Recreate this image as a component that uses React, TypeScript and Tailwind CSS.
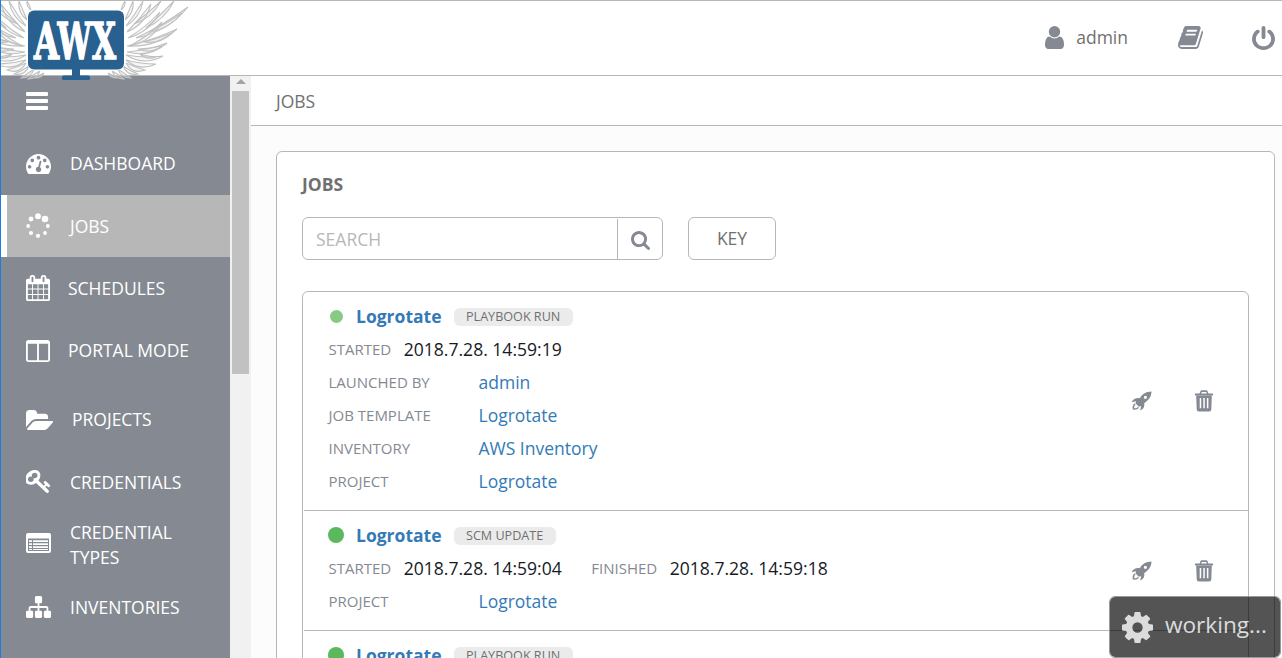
import React from 'react';

type IconProps = { box: string; className: string; children: React.ReactNode };

function Icon({ box, className, children }: IconProps) {
  return (
    <svg viewBox={box} className={className} fill="currentColor" fillRule="evenodd" preserveAspectRatio="none">
      {children}
    </svg>
  );
}

const paths = {
  gauge:
    'M384 1152q0-53-37.5-90.5t-90.5-37.5-90.5 37.5-37.5 90.5 37.5 90.5 90.5 37.5 90.5-37.5 37.5-90.5zm192-448q0-53-37.5-90.5t-90.5-37.5-90.5 37.5-37.5 90.5 37.5 90.5 90.5 37.5 90.5-37.5 37.5-90.5zm428 481l101-382q6-26-7.5-48.5t-38.5-29.5-48 6.5-30 39.5l-101 382q-60 5-107 43.5t-63 98.5q-20 77 20 146t117 89 146-20 89-117q16-60-6-117t-72-91zm660-33q0-53-37.5-90.5t-90.5-37.5-90.5 37.5-37.5 90.5 37.5 90.5 90.5 37.5 90.5-37.5 37.5-90.5zm-640-640q0-53-37.5-90.5t-90.5-37.5-90.5 37.5-37.5 90.5 37.5 90.5 90.5 37.5 90.5-37.5 37.5-90.5zm448 192q0-53-37.5-90.5t-90.5-37.5-90.5 37.5-37.5 90.5 37.5 90.5 90.5 37.5 90.5-37.5 37.5-90.5zm320 448q0 261-141 483-19 29-54 29h-1402q-35 0-54-29-141-221-141-483 0-182 71-348t191-286 286-191 348-71 348 71 286 191 191 286 71 348z',
  calendar:
    'M192 1664h288v-288h-288v288zm352 0h320v-288h-320v288zm-352-352h288v-320h-288v320zm352 0h320v-320h-320v320zm-352-384h288v-288h-288v288zm736 736h320v-288h-320v288zm-384-736h320v-288h-320v288zm768 736h288v-288h-288v288zm-384-352h320v-320h-320v320zm-352-864v-288q0-13-9.5-22.5t-22.5-9.5h-64q-13 0-22.5 9.5t-9.5 22.5v288q0 13 9.5 22.5t22.5 9.5h64q13 0 22.5-9.5t9.5-22.5zm736 864h288v-320h-288v320zm-384-384h320v-288h-320v288zm384 0h288v-288h-288v288zm32-480v-288q0-13-9.5-22.5t-22.5-9.5h-64q-13 0-22.5 9.5t-9.5 22.5v288q0 13 9.5 22.5t22.5 9.5h64q13 0 22.5-9.5t9.5-22.5zm384-64v1280q0 52-38 90t-90 38h-1408q-52 0-90-38t-38-90v-1280q0-52 38-90t90-38h128v-96q0-66 47-113t113-47h64q66 0 113 47t47 113v96h384v-96q0-66 47-113t113-47h64q66 0 113 47t47 113v96h128q52 0 90 38t38 90z',
  columns:
    'M224 1536h608v-1152h-640v1120q0 13 9.5 22.5t22.5 9.5zm1376-32v-1120h-640v1152h608q13 0 22.5-9.5t9.5-22.5zm128-1216v1216q0 66-47 113t-113 47h-1344q-66 0-113-47t-47-113v-1216q0-66 47-113t113-47h1344q66 0 113 47t47 113z',
  folder:
    'M1815 952q0 31-31 66l-336 396q-43 51-120.5 86.5t-143.5 35.5h-1088q-34 0-60.5-13t-26.5-43q0-31 31-66l336-396q43-51 120.5-86.5t143.5-35.5h1088q34 0 60.5 13t26.5 43zm-343-344v160h-832q-94 0-197 47.5t-164 119.5l-337 396-5 6q0-4-.5-12.5t-.5-12.5v-960q0-92 66-158t158-66h320q92 0 158 66t66 158v32h544q92 0 158 66t66 158z',
  key:
    'M832 512q0-80-56-136t-136-56-136 56-56 136q0 42 19 83-41-19-83-19-80 0-136 56t-56 136 56 136 136 56 136-56 56-136q0-42-19-83 41 19 83 19 80 0 136-56t56-136zm851 704q0 17-49 66t-66 49q-9 0-28.5-16t-36.5-33-38.5-40-24.5-26l-96 96 220 220q28 28 28 68 0 42-39 81t-81 39q-40 0-68-28l-671-671q-176 131-365 131-163 0-265.5-102.5t-102.5-265.5q0-160 95-313t248-248 313-95q163 0 265.5 102.5t102.5 265.5q0 189-131 365l355 355 96-96q-3-3-26-24.5t-40-38.5-33-36.5-16-28.5q0-17 49-66t66-49q13 0 23 10 6 6 46 44.5t82 79.5 86.5 86 73 78 28.5 41z',
  sitemap:
    'M1792 1248v320q0 40-28 68t-68 28h-320q-40 0-68-28t-28-68v-320q0-40 28-68t68-28h96v-192h-512v192h96q40 0 68 28t28 68v320q0 40-28 68t-68 28h-320q-40 0-68-28t-28-68v-320q0-40 28-68t68-28h96v-192h-512v192h96q40 0 68 28t28 68v320q0 40-28 68t-68 28h-320q-40 0-68-28t-28-68v-320q0-40 28-68t68-28h96v-192q0-52 38-90t90-38h512v-192h-96q-40 0-68-28t-28-68v-320q0-40 28-68t68-28h320q40 0 68 28t28 68v320q0 40-28 68t-68 28h-96v192h512q52 0 90 38t38 90v192h96q40 0 68 28t28 68z',
  user:
    'M1536 1399q0 109-62.5 187t-150.5 78h-854q-88 0-150.5-78t-62.5-187q0-85 8.5-160.5t31.5-152 58.5-131 94-89 134.5-34.5q131 128 313 128t313-128q76 0 134.5 34.5t94 89 58.5 131 31.5 152 8.5 160.5zm-256-887q0 159-112.5 271.5t-271.5 112.5-271.5-112.5-112.5-271.5 112.5-271.5 271.5-112.5 271.5 112.5 112.5 271.5z',
  book:
    'M1703 478q40 57 18 129l-275 906q-19 64-76.5 107.5t-122.5 43.5h-923q-77 0-148.5-53.5t-99.5-131.5q-24-67-2-127 0-4 3-27t4-37q1-8-3-21.5t-3-19.5q2-11 8-21t16.5-23.5 16.5-23.5q23-38 45-91.5t30-91.5q3-10 .5-30t-.5-28q3-11 17-28t17-23q21-36 42-92t25-90q1-9-2.5-32t.5-28q4-13 22-30.5t22-22.5q19-26 42.5-84.5t27.5-96.5q1-8-3-25.5t-2-26.5q2-8 9-18t18-23 17-21q8-12 16.5-30.5t15-35 16-36 19.5-32 26.5-23.5 36-11.5 47.5 5.5l-1 3q38-9 51-9h761q74 0 114 56t18 130l-274 906q-36 119-71.5 153.5t-128.5 34.5h-869q-27 0-38 15-11 16-1 43 24 70 144 70h923q29 0 56-15.5t35-41.5l300-987q7-22 5-57 38 15 59 43zm-1064 2q-4 13 2 22.5t20 9.5h608q13 0 25.5-9.5t16.5-22.5l21-64q4-13-2-22.5t-20-9.5h-608q-13 0-25.5 9.5t-16.5 22.5zm-83 256q-4 13 2 22.5t20 9.5h608q13 0 25.5-9.5t16.5-22.5l21-64q4-13-2-22.5t-20-9.5h-608q-13 0-25.5 9.5t-16.5 22.5z',
  power:
    'M1664 896q0 156-61 298t-164 245-245 164-298 61-298-61-245-164-164-245-61-298q0-182 80.5-343t226.5-270q43-32 95.5-25t83.5 50q32 42 24.5 94.5t-49.5 84.5q-98 74-151.5 181t-53.5 228q0 104 40.5 198.5t109.5 163.5 163.5 109.5 198.5 40.5 198.5-40.5 163.5-109.5 109.5-163.5 40.5-198.5q0-121-53.5-228t-151.5-181q-42-32-49.5-84.5t24.5-94.5q31-43 84-50t95 25q146 109 226.5 270t80.5 343zm-640-768v640q0 52-38 90t-90 38-90-38-38-90v-640q0-52 38-90t90-38 90 38 38 90z',
  search:
    'M1216 832q0-185-131.5-316.5t-316.5-131.5-316.5 131.5-131.5 316.5 131.5 316.5 316.5 131.5 316.5-131.5 131.5-316.5zm512 832q0 52-38 90t-90 38q-54 0-90-38l-343-342q-179 124-399 124-143 0-273.5-55.5t-225-150-150-225-55.5-273.5 55.5-273.5 150-225 225-150 273.5-55.5 273.5 55.5 225 150 150 225 55.5 273.5q0 220-124 399l343 343q37 37 37 90z',
  cog:
    'M1152 896q0-106-75-181t-181-75-181 75-75 181 75 181 181 75 181-75 75-181zm512-109v222q0 12-8 23t-20 13l-185 28q-19 54-39 91 35 50 107 138 10 12 10 25t-9 23q-27 37-99 108t-94 71q-12 0-26-9l-138-108q-44 23-91 38-16 136-29 186-7 28-36 28h-222q-14 0-24.5-8.5t-11.5-21.5l-28-184q-49-16-90-37l-141 107q-10 9-25 9-14 0-25-11-126-114-165-168-7-10-7-23 0-12 8-23 15-21 51-66.5t54-70.5q-27-50-41-99l-183-27q-13-2-21-12.5t-8-23.5v-222q0-12 8-23t19-13l186-28q14-46 39-92-40-57-107-138-10-12-10-24 0-10 9-23 26-36 98.5-107.5t94.5-71.5q13 0 26 10l138 107q44-23 91-38 16-136 29-186 7-28 36-28h222q14 0 24.5 8.5t11.5 21.5l28 184q49 16 90 37l142-107q9-9 24-9 13 0 25 10 129 119 165 170 7 8 7 22 0 12-8 23-15 21-51 66.5t-54 70.5q26 50 41 98l183 28q13 2 21 12.5t8 23.5z',
};

type Feather = [number, number, number, number, number, number];

// base x, base y, tip x, tip y, bend, width
const feathers: Feather[] = [
  [136, 38, 188, 7, 7, 4],
  [150, 32, 182, 13, 4, 3],
  [127, 46, 177, 29, 7, 4],
  [144, 42, 172, 33, 4, 3],
  [127, 52, 167, 43, 7, 4],
  [138, 49, 162, 46, 4, 3],
  [126, 55, 163, 56, 7, 4],
  [140, 54, 156, 57, 3, 2],
  [126, 60, 156, 64, 6, 4],
  [126, 63, 145, 70, 5, 4],
  [123, 66, 138, 74, 4, 3],
  [118, 69, 131, 78, 3, 3],
  [112, 71, 124, 79, 2, 3],
  [108, 73, 116, 78, 1, 2],
  [128, 38, 160, 12, 6, 3],
  [127, 32, 151, 4, 5, 4],
  [126, 26, 143, 1, 4, 3],
  [125, 20, 133, 1, 3, 3],
  [121, 10, 125, 1, 1, 2],
  [130, 46, 162, 22, 6, 3],
  [146, 28, 174, 1, 4, 3],
  [134, 24, 161, 1, 4, 3],
];

function featherPath([bx, by, tx, ty, bend, w]: Feather) {
  const mx = (bx + tx) / 2;
  const my = (by + ty) / 2;
  const len = Math.hypot(tx - bx, ty - by);
  const nx = -(ty - by) / len;
  const ny = (tx - bx) / len;
  const q = (d: number) => `${(mx + nx * d).toFixed(1)} ${(my + ny * d).toFixed(1)}`;
  return `M${bx} ${by}Q${q(bend + w)} ${tx} ${ty}Q${q(bend - w)} ${bx} ${by}`;
}

function Logo() {
  return (
    <svg viewBox="0 0 200 84" className="block h-[84px] w-[200px]">
      {['', 'translate(152 0) scale(-1 1)'].map((t) => (
        <g key={t} transform={t} fill="#e4e4e4" fillOpacity="0.35" stroke="#c0c0c0" strokeWidth="1.100">
          {feathers.map((f, i) => (
            <path key={i} d={featherPath(f)} />
          ))}
        </g>
      ))}
      <rect x="27" y="9.500" width="98" height="61" rx="8" fill="#fff" />
      <rect x="28" y="10.500" width="96" height="59" rx="6" fill="#286090" />
      <path d="M72 69h8v6.500h8.500a1.500 1.500 0 0 1 1.500 1.500v1.500a1.500 1.500 0 0 1-1.500 1.500h-25a1.500 1.500 0 0 1-1.500-1.500v-1.500a1.500 1.500 0 0 1 1.500-1.500h8.500z" fill="#286090" />
      <g fill="#fff" stroke="#fff" strokeWidth="1.600" fontSize="50" fontWeight="700" fontFamily="'DejaVu Serif', serif">
        <text x="34" y="58.500" textLength="25" lengthAdjust="spacingAndGlyphs">A</text>
        <text x="57.500" y="58.500" textLength="34" lengthAdjust="spacingAndGlyphs">W</text>
        <text x="92" y="58.500" textLength="24" lengthAdjust="spacingAndGlyphs">X</text>
      </g>
    </svg>
  );
}

function Spinner() {
  const dots = [
    [13, 3.2, 2.9], [20, 6, 3.3], [22.8, 13, 1.9], [20, 20, 1.9],
    [13, 22.8, 2.1], [6, 20, 2.1], [3.2, 13, 1.9], [6, 6, 2.4],
  ];
  return (
    <Icon box="0 0 26 26" className="-ml-px mr-px h-[26px] w-[26px]">
      {dots.map(([x, y, r]) => (
        <circle key={`${x}-${y}`} cx={x} cy={y} r={r} />
      ))}
    </Icon>
  );
}

function Rocket() {
  return (
    <Icon box="0 0 21 20" className="h-5 w-[21px]">
      <path d="M20.500 0.500C15 0.600 11.500 2.800 8.700 7.200C5 6.700 2.500 8 0.500 11.200L5 10.300L4.500 12.300L7.800 15.700L9.900 15C9.900 17 9.900 18 8.700 19.500C12.200 18.500 13.800 16 13.200 12.200C17.600 9 20.400 6 20.500 0.500zM14.400 4.700a1.600 1.600 0 1 1 0 3.200a1.600 1.600 0 0 1 0-3.200z" />
      <path d="M3.600 12.200C1.500 14 1.300 16 1.800 18.500C4.500 18.900 6.800 18.400 8 16.700L6.800 16C6 17 4.700 17.400 3.300 17.200C3 15.800 3.300 14.500 4.600 13.500z" />
    </Icon>
  );
}

function Trash() {
  return (
    <Icon box="0 0 20 22" className="h-[22px] w-5">
      <path d="M1 3.400h4.600l.8-2.100Q6.800.3 7.800.3h4.400q1 0 1.400 1l.8 2.100H19v2.200H1zM7.200 3.400h5.600l-.5-1.300H7.700z" />
      <path d="M2.200 5.400h15.600l-.5 14.100q-.2 1.900-2.100 1.900H4.800q-1.900 0-2.100-1.900zM5.700 8v10.300h1.500V8zm3.600 0v10.300h1.500V8zm3.600 0v10.300h1.500V8z" />
    </Icon>
  );
}

function NavItem({ icon, gap, label, active }: { icon: React.ReactNode; gap: string; label: React.ReactNode; active?: boolean }) {
  return (
    <div
      className={
        active
          ? 'flex h-[62px] items-center border-l-[6px] border-white bg-[#b7b7b7] pl-[19px]'
          : 'flex h-[62.600px] shrink-0 items-center pl-[25px]'
      }
    >
      {icon}
      <span className={`${gap} whitespace-nowrap leading-[25px]`}>{label}</span>
    </div>
  );
}

function Sidebar() {
  return (
    <nav className="w-[229px] shrink-0 overflow-hidden bg-[#848992] text-[17.500px] text-white">
      <div className="flex h-[56.500px] flex-col gap-[3px] pt-4 pl-[25px]">
        <span className="h-1 w-[22px] rounded-[1px] bg-white" />
        <span className="h-1 w-[22px] rounded-[1px] bg-white" />
        <span className="h-1 w-[22px] rounded-[1px] bg-white" />
      </div>
      <NavItem label="DASHBOARD" gap="ml-[19px]" icon={<Icon box="0 256 1792 1408" className="h-5 w-[25px]"><path d={paths.gauge} /></Icon>} />
      <NavItem label="JOBS" gap="ml-[18px]" active icon={<Spinner />} />
      <NavItem label="SCHEDULES" gap="ml-[18px]" icon={<Icon box="64 0 1664 1792" className="h-[26px] w-6"><path d={paths.calendar} /></Icon>} />
      <NavItem label="PORTAL MODE" gap="ml-[18px]" icon={<Icon box="64 128 1664 1536" className="h-[22px] w-6"><path d={paths.columns} /></Icon>} />
      <div className="h-[6px]" />
      <NavItem label="PROJECTS" gap="ml-[19px]" icon={<Icon box="-64 128 1879 1408" className="h-5 w-[27px]"><path d={paths.folder} /></Icon>} />
      <NavItem label="CREDENTIALS" gap="ml-[19px]" icon={<Icon box="64 128 1664 1664" className="h-6 w-[25px]"><path d={paths.key} /></Icon>} />
      <NavItem
        label={<>CREDENTIAL<br />TYPES</>}
        gap="ml-[19px]"
        icon={
          <Icon box="0 0 25 20" className="mt-[-3px] h-5 w-[25px]">
            <path d="M2 0h21a2 2 0 0 1 2 2v16a2 2 0 0 1-2 2H2a2 2 0 0 1-2-2V2a2 2 0 0 1 2-2zM2 5.500V18h21V5.500z" />
            <path d="M3 7.200h3v1.900H3zM3 10.200h3v1.900H3zM3 13.200h3v1.900H3zM3 16h3v1H3zM7 7.200h15v1.900H7zM7 10.200h15v1.900H7zM7 13.200h15v1.900H7zM7 16h15v1H7z" />
          </Icon>
        }
      />
      <NavItem label="INVENTORIES" gap="ml-[19px]" icon={<Icon box="0 128 1792 1536" className="h-[22px] w-[25px]"><path d={paths.sitemap} /></Icon>} />
    </nav>
  );
}

type Job = {
  type: string;
  running?: boolean;
  started: string;
  finished?: string;
  details: [string, string][];
};

const jobs: Job[] = [
  {
    type: 'PLAYBOOK RUN',
    running: true,
    started: '2018.7.28. 14:59:19',
    details: [['LAUNCHED BY', 'admin'], ['JOB TEMPLATE', 'Logrotate'], ['INVENTORY', 'AWS Inventory'], ['PROJECT', 'Logrotate']],
  },
  { type: 'SCM UPDATE', started: '2018.7.28. 14:59:04', finished: '2018.7.28. 14:59:18', details: [['PROJECT', 'Logrotate']] },
  { type: 'PLAYBOOK RUN', started: '2018.7.28. 14:58:40', details: [] },
];

function JobRow({ job, first }: { job: Job; first: boolean }) {
  return (
    <div className={first ? 'flex items-center pb-[12px] pt-[8px]' : 'ml-px flex items-center border-t border-[#b7b7b7] pb-[12px] pt-[8px]'}>
      <div className={first ? 'flex-1 pl-[25.500px] text-[17.500px] leading-[33px]' : 'flex-1 pl-[24.500px] text-[17.500px] leading-[33px]'}>
        <div className="flex h-[33px] items-center">
          <span className="flex w-[27.500px] shrink-0 items-center">
            {job.running ? (
              <span className="mb-px ml-[1.500px] h-[13px] w-[13px] rounded-full bg-[#86cb84]" />
            ) : (
              <span className="mb-[2px] ml-[-0.500px] h-4 w-4 rounded-full bg-[#5cb85c]" />
            )}
          </span>
          <span className="font-bold text-[#337ab7]">Logrotate</span>
          <span className="ml-3 mt-px h-[18px] rounded-[6px] bg-[#ebebeb] px-[12.500px] text-[12.600px] leading-[17px] text-[#707070]">{job.type}</span>
        </div>
        <div className="flex h-[33px]">
          <span className="text-[15px] text-[#848992]">STARTED</span>
          <span className="ml-[12.500px] text-[17.560px] text-[#161b1f]">{job.started}</span>
          {job.finished && (
            <>
              <span className="ml-[29.500px] text-[15px] text-[#848992]">FINISHED</span>
              <span className="ml-[12.500px] text-[17.560px] text-[#161b1f]">{job.finished}</span>
            </>
          )}
        </div>
        {job.details.map(([label, value]) => (
          <div key={label} className="flex h-[33px]">
            <span className="w-[150px] text-[15px] text-[#848992]">{label}</span>
            <span className="text-[#337ab7]">{value}</span>
          </div>
        ))}
      </div>
      <div className="flex items-center gap-[42px] pt-[4px] pr-[34px] text-[#848992]">
        <Rocket />
        <Trash />
      </div>
    </div>
  );
}

function Content() {
  return (
    <main className="flex flex-1 flex-col overflow-hidden bg-[#fcfcfc]">
      <div className="flex h-[50px] shrink-0 items-center border-b border-[#b7b7b7] bg-white pl-[25px] pt-[2px] text-[17.500px] text-[#707070]">JOBS</div>
      <section className="mr-[7px] ml-[25px] mt-[25px] h-[600px] shrink-0 rounded-[6px] border border-[#b7b7b7] bg-white px-[25px] pt-5">
        <h1 className="text-[17.500px] leading-[25px] font-bold text-[#707070]">JOBS</h1>
        <div className="mt-5 flex gap-[25px]">
          <div className="flex h-[43px] w-[361px] rounded-[6px] border border-[#b7b7b7]">
            <span className="flex-1 pl-[13px] text-[17.500px] leading-[43px] text-[#b7b7b7]">SEARCH</span>
            <span className="mt-px flex w-[45px] items-center justify-center border-l border-[#b7b7b7] pt-[3px] text-[#848992]">
              <Icon box="64 128 1664 1664" className="h-[19px] w-[19px]"><path d={paths.search} /></Icon>
            </span>
          </div>
          <button className="h-[43px] w-[88px] rounded-[6px] border border-[#b7b7b7] text-[17.500px] text-[#707070]">KEY</button>
        </div>
        <div className="mt-[31px] w-[947px] rounded-[6px] border border-[#b7b7b7]">
          {jobs.map((job, i) => (
            <JobRow key={i} job={job} first={i === 0} />
          ))}
        </div>
      </section>
    </main>
  );
}

export default function App() {
  return (
    <div className="relative flex h-[658px] w-[1282px] flex-col overflow-hidden border-l border-[#1f7fd8] bg-white font-['Open_Sans',sans-serif]">
      <header className="flex h-[76px] shrink-0 items-center justify-end border-t border-b border-[#b7b7b7] pr-[7px] pb-px text-[#848992]">
        <Icon box="256 128 1280 1536" className="h-[23px] w-[19px]"><path d={paths.user} /></Icon>
        <span className="ml-3 text-[17.500px] text-[#707070]">admin</span>
        <Icon box="64 128 1664 1536" className="ml-[50px] h-[23px] w-[25px]"><path d={paths.book} /></Icon>
        <Icon box="128 0 1536 1664" className="ml-[49px] h-[24px] w-[23px]"><path d={paths.power} /></Icon>
      </header>
      <div className="flex min-h-0 flex-1">
        <Sidebar />
        <div className="flex w-[21px] shrink-0 flex-col items-center bg-[#f1f1f1]">
          <span className="mt-[3px] h-0 w-0 border-x-[5px] border-b-[5px] border-x-transparent border-b-[#a3a3a3]" />
          <span className="mt-[7px] h-[283px] w-[17px] bg-[#c1c1c1]" />
        </div>
        <Content />
      </div>
      <div className="absolute top-0 left-[-1px]">
        <Logo />
      </div>
      <div className="absolute inset-y-0 left-[-1px] w-px bg-[#1f7fd8]" />
      <div className="absolute right-px bottom-0 flex h-[62px] w-[172px] items-center rounded-[6px] border border-[#999] bg-black/67 bg-clip-padding pl-[12px] text-[#dcdcdc]">
        <Icon box="128 128 1536 1536" className="h-[31px] w-[31px]"><path d={paths.cog} /></Icon>
        <span className="ml-[12px] pb-1 text-[22.600px]">working...</span>
      </div>
    </div>
  );
}
